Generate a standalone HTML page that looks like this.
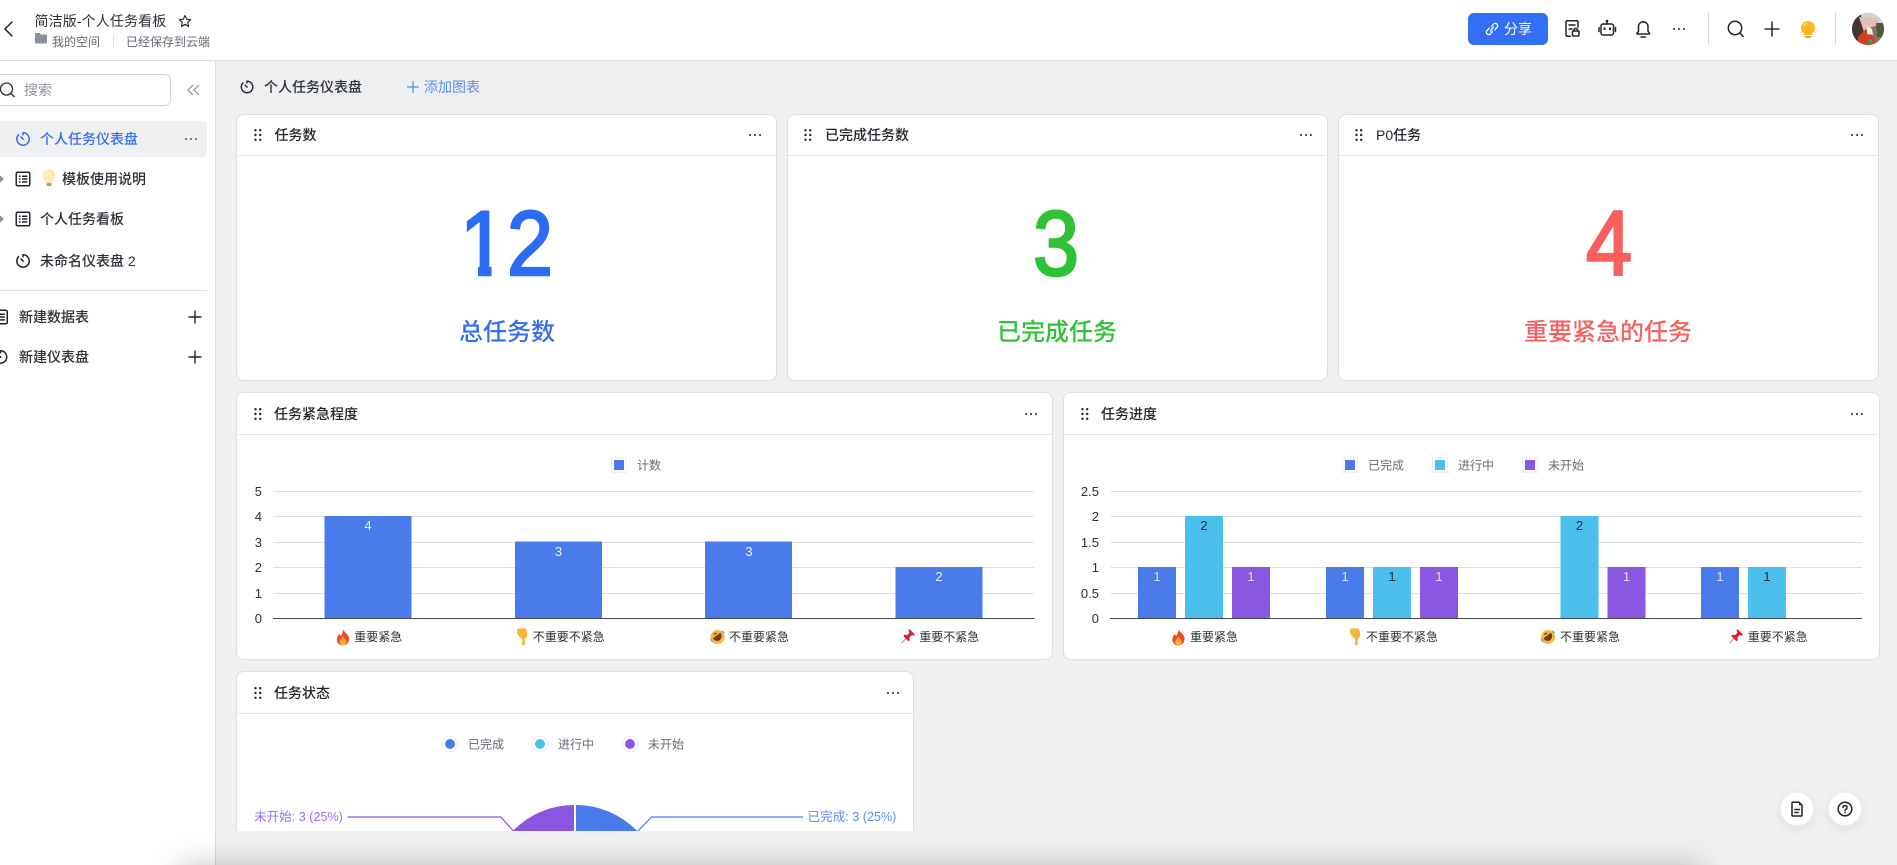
<!DOCTYPE html>
<html lang="zh-CN">
<head>
<meta charset="utf-8">
<title>简洁版-个人任务看板</title>
<style>
html,body{margin:0;padding:0;width:1897px;height:865px;overflow:hidden;background:#eff0f2;}
body{position:relative;font-family:"Liberation Sans","Noto Sans CJK SC",sans-serif;color:#1f2329;}
.t{position:absolute;white-space:nowrap;line-height:20px;height:20px;font-size:14px;}
.n{font-weight:500;color:#2b2f36;}
.hdr{position:absolute;left:0;top:0;width:1897px;height:60px;background:#fff;border-bottom:1px solid #dcdee1;}
.side{position:absolute;left:0;top:61px;width:215px;height:804px;background:#fff;border-right:1px solid #d9dbde;}
.search{position:absolute;left:-10px;top:74px;width:179px;height:30px;border:1px solid #d0d3d6;border-radius:6px;background:#fff;}
.act{position:absolute;left:0;top:121px;width:207px;height:36px;background:#eff0f2;border-radius:0 4px 4px 0;}
.dvd{position:absolute;left:0;top:290px;width:207px;height:1px;background:#dcdee1;}
.card{position:absolute;background:#fff;border:1px solid #dcdee1;border-radius:8px;box-sizing:border-box;}
.hr{position:absolute;height:1px;background:#e0e2e5;}
.ct{font-weight:500;color:#1f2329;}
.big{position:absolute;font-size:92px;font-weight:400;line-height:92px;height:92px;width:60px;white-space:nowrap;transform:scaleX(.9);text-align:center;-webkit-text-stroke:2.6px currentColor;}
.sub{position:absolute;font-size:24px;font-weight:500;line-height:34px;height:34px;white-space:nowrap;text-align:center;}
.share{position:absolute;left:1468px;top:13px;width:80px;height:32px;border-radius:6px;background:#336ff5;}
.sep{position:absolute;width:1px;background:#d6d8db;}
.cover{position:absolute;left:216px;top:831px;width:1681px;height:34px;background:#eff0f2;}
.shade{position:absolute;left:185px;top:873px;width:1510px;height:20px;box-shadow:0 0 32px 6px rgba(0,0,0,.26);background:#bbb;}
.fab{position:absolute;width:34px;height:34px;border-radius:50%;background:#fff;box-shadow:0 3px 10px rgba(0,0,0,.08);border:1px solid #f0f1f2;box-sizing:border-box;}
svg{overflow:visible;}
svg.layer{position:absolute;left:0;top:0;width:1897px;height:865px;pointer-events:none;}
svg text{font-family:"Liberation Sans","Noto Sans CJK SC",sans-serif;}
.ic{fill:none;stroke:#1f2329;stroke-width:1.5;stroke-linecap:round;stroke-linejoin:round;}
</style>
</head>
<body>

<svg width="0" height="0" style="position:absolute">
<defs>
<symbol id="clock" viewBox="0 0 16 16"><path d="M8 1.4a6.6 6.6 0 1 1-4.7 2" fill="none" stroke="currentColor" stroke-width="1.6" stroke-linecap="round"/><path d="M8 1.4v2M8.2 8.2 5.8 5.8" fill="none" stroke="currentColor" stroke-width="1.6" stroke-linecap="round"/></symbol>
<symbol id="table" viewBox="0 0 16 16"><rect x=".8" y=".8" width="14.4" height="14.4" rx="1.5" fill="none" stroke="currentColor" stroke-width="1.6"/><path d="M3.6 5h1.8M7 5h5.6M3.6 8h1.8M7 8h5.6M3.6 11h1.8M7 11h5.6" stroke="currentColor" stroke-width="1.6"/></symbol>
<symbol id="drag" viewBox="0 0 8 12"><g fill="#1f2329"><circle cx="1.5" cy="1.2" r="1.2"/><circle cx="6.2" cy="1.2" r="1.2"/><circle cx="1.5" cy="6" r="1.2"/><circle cx="6.2" cy="6" r="1.2"/><circle cx="1.5" cy="10.800" r="1.2"/><circle cx="6.2" cy="10.800" r="1.2"/></g></symbol>
<symbol id="more" viewBox="0 0 14 4"><g fill="#1f2329"><circle cx="2" cy="2" r="1"/><circle cx="7" cy="2" r="1"/><circle cx="12" cy="2" r="1"/></g></symbol>
<symbol id="plus" viewBox="0 0 14 14"><path d="M7 0v14M0 7h14" stroke="currentColor" stroke-width="1.5" fill="none"/></symbol>
<symbol id="fire" viewBox="0 0 14 16"><path d="M7 0c.5 3 4 4.500 5.500 8 1.200 3.500-1.500 8-5.500 8S.3 12.500 1.500 8.500C2 7 3 6 3.500 5c.5 1 1 1.500 1.500 2C6 5 7.500 3 7 0z" fill="#ef4b23"/><path d="M7 7c.5 2 3 3 3 5.500S8.500 16 7 16s-3-1.300-3-3.500C4 10.500 6.500 9.500 7 7z" fill="#fbb03b"/></symbol>
<symbol id="hand" viewBox="0 0 12 16"><path d="M1 0h8c1 2 1.500 4 1.500 6 0 1.800-.8 3-2.300 3.200V14.500c0 1.800-2.600 1.800-2.600 0V9.500C3.800 9 1.500 6 1 4z" fill="#f5b537"/></symbol>
<symbol id="rofl" viewBox="0 0 16 16"><circle cx="8" cy="8" r="7.500" fill="#f6b93b"/><path d="M3 9.500 11 3.500c2 2 2 5-.5 7.500S5 12 3 9.500z" fill="#7a3b16"/><path d="M4 5.200l3-1.500M9.500 10.800l2.200-2.300" stroke="#5b3310" stroke-width="1.200"/><path d="M1 10c0 2 1 3 3 3M12 2c1.500 0 2.500.8 3 2" stroke="#5db5ea" stroke-width="1.500" fill="none"/></symbol>
<symbol id="pin" viewBox="0 0 16 16"><path d="M1 15 6.500 9.500" stroke="#8a8f96" stroke-width="1"/><path d="M9.500 0 15.500 6 13.500 7 12 6.500 9.500 9 10 12 8.500 13 3 7.500 4 6 7 6.500 9.500 4 8.500 2z" fill="#d8232f"/></symbol>
<clipPath id="clipTop"><rect x="0" y="0" width="1897" height="831"/></clipPath>
</defs>
</svg>

<!-- top bar -->
<div class="hdr"></div>
<svg class="layer" style="z-index:2">
  <path d="M12 22 5 29l7 7" class="ic" stroke-width="1.600"/>
  <path d="M185 15.500l1.700 3.700 4 .5-3 2.700.8 4-3.500-2-3.500 2 .8-4-3-2.700 4-.5z" fill="none" stroke="#1f2329" stroke-width="1.100" stroke-linejoin="round"/>
  <path d="M35 34a1 1 0 0 1 1-1h3.500l1.500 1.500h5a1 1 0 0 1 1 1v7a1 1 0 0 1-1 1H36a1 1 0 0 1-1-1z" fill="#8b929c"/>
  <rect x="113" y="35" width="1" height="11" fill="#dcdee1"/>
</svg>
<div class="t" style="left:34.500px;top:11px;color:#2b2f36;letter-spacing:.12px">简洁版-个人任务看板</div>
<div class="t" style="left:52px;top:32px;font-size:12px;color:#646a73">我的空间</div>
<div class="t" style="left:126px;top:32px;font-size:12px;color:#646a73">已经保存到云端</div>

<div class="share"></div>
<div class="t" style="left:1504px;top:19px;color:#fff;z-index:2">分享</div>
<div class="sep" style="left:1708px;top:13px;height:32px"></div>
<div class="sep" style="left:1835px;top:13px;height:32px"></div>
<svg class="layer" style="z-index:2">
  <!-- link -->
  <g fill="none" stroke="#fff" stroke-width="1.300" stroke-linecap="round">
    <path d="M1491.500 26.500l2-2.300a2.400 2.400 0 0 1 3.500 3.300l-2.200 2.300"/>
    <path d="M1492.500 31.500l-2 2.300a2.400 2.400 0 0 1-3.500-3.300l2.200-2.300"/>
    <path d="M1490.500 31l3-4"/>
  </g>
  <!-- doc lock -->
  <g class="ic">
    <path d="M1578 27v-5a1.300 1.300 0 0 0-1.300-1.300h-9.400a1.300 1.300 0 0 0-1.300 1.300v13a1.300 1.300 0 0 0 1.300 1.300h3"/>
    <path d="M1569 25h6M1569 29h3"/>
    <rect x="1572.500" y="31" width="6.500" height="5" rx="1"/>
    <path d="M1574 31v-1.200a1.800 1.800 0 0 1 3.500 0V31"/>
  </g>
  <!-- robot -->
  <g class="ic">
    <rect x="1601" y="24" width="12.500" height="11" rx="2"/>
    <path d="M1607 24v-2.500"/>
    <path d="M1599 27.500v4M1615.500 27.500v4"/>
  </g>
  <circle cx="1607" cy="21" r="1.300" fill="#1f2329"/>
  <rect x="1603.500" y="27.500" width="2" height="2.500" fill="#1f2329"/><rect x="1609" y="27.500" width="2" height="2.500" fill="#1f2329"/>
  <!-- bell -->
  <g class="ic">
    <path d="M1637 34h12.500v-.8l-1.500-2v-4.700a4.700 4.700 0 0 0-9.500 0v4.700l-1.500 2z"/>
    <path d="M1641 37h4.500"/>
    <path d="M1643.300 21.500v.5"/>
  </g>
  <use href="#more" x="1672" y="27" width="14" height="4"/>
  <!-- search -->
  <g class="ic" stroke-width="1.600">
    <circle cx="1735" cy="28" r="6.700"/><path d="M1740 33l3.200 3.500"/>
  </g>
  <!-- plus -->
  <path d="M1772 21.500v15M1764.500 29h15" stroke="#2b2f36" stroke-width="1.600" fill="none"/>
  <!-- top bulb -->
  <path d="M1808 21a7 7 0 0 1 4 12.800V35h-8v-1.200a7 7 0 0 1 4-12.800z" fill="#ffb820"/>
  <path d="M1804.500 36h7l-1.200 1.800h-4.600z" fill="#f5862c"/>
  <path d="M1803.500 26a5 5 0 0 1 3-2.500" stroke="#ffe7a8" stroke-width="1" fill="none"/>
  <!-- avatar -->
  <clipPath id="av"><circle cx="1868" cy="29" r="16"/></clipPath>
  <g clip-path="url(#av)">
    <rect x="1852" y="13" width="32" height="32" fill="#8f6f62"/>
    <rect x="1852" y="13" width="32" height="10" fill="#cfd3d6"/>
    <path d="M1852 13h8l5 13-6 19h-7z" fill="#43342f"/>
    <path d="M1859 17l17 1 5 7-10 2-6 8z" fill="#e6bdb4"/>
    <path d="M1876 23h8v14h-7z" fill="#4e5a38"/>
    <path d="M1858 37l8-8 6 6 5 10h-19z" fill="#cf3f2c"/>
    <path d="M1867 26l5 3 1 6-6-1z" fill="#f4eee7"/>
    <path d="M1868 40l3-1 2 3-4 2z" fill="#3d9e56"/>
  </g>
</svg>

<!-- sidebar -->
<div class="side"></div>
<div class="search"></div>
<div class="act"></div>
<div class="dvd"></div>
<div class="t" style="left:24px;top:80px;color:#8f959e">搜索</div>
<div class="t" style="left:40px;top:129px;color:#336df4;font-weight:500">个人任务仪表盘</div>
<div class="t n" style="left:62px;top:169px">模板使用说明</div>
<div class="t n" style="left:40px;top:209px">个人任务看板</div>
<div class="t n" style="left:40px;top:251px">未命名仪表盘 2</div>
<div class="t n" style="left:19px;top:307px">新建数据表</div>
<div class="t n" style="left:19px;top:347px">新建仪表盘</div>

<svg class="layer" style="z-index:2">
  <g fill="none" stroke="#2b2f36" stroke-width="1.300"><circle cx="6.500" cy="89" r="6"/><path d="M11 93.500l3.500 3.500"/></g>
  <path d="M193 85l-5 5 5 5M199 85l-5 5 5 5" fill="none" stroke="#8a9099" stroke-width="1.200"/>
  <use href="#clock" x="15.500" y="131.500" width="15" height="15" style="color:#336df4"/>
  <use href="#more" x="184" y="137" width="14" height="4" opacity=".75"/>
  <path d="M0 175.500l4 3.500-4 3.500zM0 215.500l4 3.500-4 3.500z" fill="#8a9099"/>
  <use href="#table" x="15.500" y="171.500" width="15" height="15" style="color:#1f2329"/>
  <use href="#table" x="15.500" y="211.500" width="15" height="15" style="color:#1f2329"/>
  <use href="#clock" x="15.500" y="253.500" width="15" height="15" style="color:#1f2329"/>
  <use href="#table" x="-7" y="309.500" width="15" height="15" style="color:#1f2329"/>
  <use href="#clock" x="-7" y="349.500" width="15" height="15" style="color:#1f2329"/>
  <use href="#plus" x="188.500" y="310.500" width="13" height="13" style="color:#1f2329"/>
  <use href="#plus" x="188.500" y="350.500" width="13" height="13" style="color:#1f2329"/>
  <!-- bulb emoji -->
  <path d="M49 169.500a5.700 5.700 0 0 1 3.400 10.300l-.9 3h-5l-.9-3A5.700 5.700 0 0 1 49 169.500z" fill="#fdeeb0" stroke="#f5d77a" stroke-width=".6"/>
  <rect x="46.500" y="183" width="5" height="3" rx="1" fill="#9ca1a8"/>
</svg>

<!-- toolbar -->
<div class="t n" style="left:264px;top:77px">个人任务仪表盘</div>
<div class="t" style="left:424px;top:77px;color:#5b8cf5">添加图表</div>
<svg class="layer" style="z-index:2">
  <use href="#clock" x="240" y="80" width="14" height="14" style="color:#1f2329"/>
  <use href="#plus" x="407" y="81" width="12" height="12" style="color:#5b8cf5"/>
</svg>

<!-- cards -->
<div class="card" style="left:236px;top:113.500px;width:540.500px;height:267px"></div>
<div class="card" style="left:787px;top:113.500px;width:540.500px;height:267px"></div>
<div class="card" style="left:1338px;top:113.500px;width:540.500px;height:267px"></div>
<div class="card" style="left:236px;top:392px;width:816.500px;height:267.500px"></div>
<div class="card" style="left:1063px;top:392px;width:816.500px;height:267.500px"></div>
<div class="card" style="left:236px;top:671px;width:678px;height:190px"></div>

<div class="hr" style="left:238px;top:155px;width:537px"></div>
<div class="hr" style="left:788px;top:155px;width:538px"></div>
<div class="hr" style="left:1339px;top:155px;width:539px"></div>
<div class="hr" style="left:238px;top:434px;width:814px"></div>
<div class="hr" style="left:1064px;top:434px;width:814px"></div>
<div class="hr" style="left:238px;top:713px;width:675px"></div>

<div class="t ct" style="left:274.500px;top:125px">任务数</div>
<div class="t ct" style="left:825px;top:125px">已完成任务数</div>
<div class="t ct" style="left:1376px;top:125px">P0任务</div>
<div class="t ct" style="left:274px;top:404px">任务紧急程度</div>
<div class="t ct" style="left:1101px;top:404px">任务进度</div>
<div class="t ct" style="left:274px;top:683px">任务状态</div>

<div class="big" style="left:452.500px;top:197.500px;color:#2c6bf6;clip-path:polygon(0 0,60px 0,60px 66px,39.500px 66px,39.500px 100px,24.500px 100px,24.500px 66px,0 66px)">1</div>
<div class="big" style="left:500px;top:197.500px;color:#2c6bf6">2</div>
<div class="big" style="left:1026px;top:197.500px;color:#2fc236">3</div>
<div class="big" style="left:1578.500px;top:197.500px;color:#f85f5d">4</div>
<div class="sub" style="left:357px;top:316px;width:300px;color:#336df4">总任务数</div>
<div class="sub" style="left:907px;top:316px;width:300px;color:#2fc236">已完成任务</div>
<div class="sub" style="left:1458px;top:316px;width:300px;color:#f85f5d">重要紧急的任务</div>

<!-- charts -->
<svg class="layer" style="z-index:2">
  <g>
    <use href="#drag" x="254" y="129" width="8" height="12"/>
    <use href="#drag" x="804" y="129" width="8" height="12"/>
    <use href="#drag" x="1355" y="129" width="8" height="12"/>
    <use href="#drag" x="254" y="408" width="8" height="12"/>
    <use href="#drag" x="1081" y="408" width="8" height="12"/>
    <use href="#drag" x="254" y="687" width="8" height="12"/>
    <use href="#more" x="748" y="133" width="14" height="4"/>
    <use href="#more" x="1299" y="133" width="14" height="4"/>
    <use href="#more" x="1850" y="133" width="14" height="4"/>
    <use href="#more" x="1024" y="412" width="14" height="4"/>
    <use href="#more" x="1850" y="412" width="14" height="4"/>
    <use href="#more" x="886" y="691" width="14" height="4"/>
  </g>

  <!-- chart 1 -->
  <rect x="611.500" y="457.500" width="15" height="15" fill="#fff" stroke="#eceef0"/>
  <rect x="614" y="460" width="10" height="10" fill="#4a7bea"/>
  <text x="637" y="469.500" font-size="12" fill="#646a73">计数</text>
  <g stroke="#dcdee1" stroke-width="1">
    <path d="M273.500 491.500H1034.500M273.500 516.500H1034.500M273.500 542.500H1034.500M273.500 567.500H1034.500M273.500 593.500H1034.500"/>
  </g>
  <g font-size="13" fill="#2b2f36" text-anchor="end">
    <text x="262" y="496">5</text><text x="262" y="521">4</text><text x="262" y="547">3</text><text x="262" y="572">2</text><text x="262" y="598">1</text><text x="262" y="623">0</text>
  </g>
  <g fill="#4a7bea">
    <rect x="324.500" y="516" width="87" height="102"/>
    <rect x="515" y="541.500" width="87" height="76.500"/>
    <rect x="705" y="541.500" width="87" height="76.500"/>
    <rect x="895.500" y="567" width="87" height="51"/>
  </g>
  <path d="M273 618.500H1034.500" stroke="#41464f" stroke-width="1"/>
  <g font-size="13" fill="#fff" text-anchor="middle" opacity=".9">
    <text x="368" y="530">4</text><text x="558.500" y="556">3</text><text x="749" y="556">3</text><text x="939" y="581">2</text>
  </g>
  <g font-size="12" fill="#2b2f36">
    <text x="354.300" y="641">重要紧急</text>
    <text x="532.700" y="641">不重要不紧急</text>
    <text x="729" y="641">不重要紧急</text>
    <text x="919.300" y="641">重要不紧急</text>
  </g>
  <use href="#fire" x="335.500" y="628.500" width="15" height="17"/>
  <use href="#hand" x="516" y="628.500" width="13" height="17"/>
  <use href="#rofl" x="710" y="629.500" width="15" height="15"/>
  <use href="#pin" x="900.500" y="629" width="15" height="15"/>

  <!-- chart 2 -->
  <rect x="1342.500" y="457.500" width="15" height="15" fill="#fff" stroke="#eceef0"/><rect x="1345" y="460" width="10" height="10" fill="#4a7bea"/>
  <rect x="1432.500" y="457.500" width="15" height="15" fill="#fff" stroke="#eceef0"/><rect x="1435" y="460" width="10" height="10" fill="#4cc0ec"/>
  <rect x="1522.500" y="457.500" width="15" height="15" fill="#fff" stroke="#eceef0"/><rect x="1525" y="460" width="10" height="10" fill="#8a56e2"/>
  <g font-size="12" fill="#646a73">
    <text x="1368" y="469.500">已完成</text><text x="1458" y="469.500">进行中</text><text x="1548" y="469.500">未开始</text>
  </g>
  <path d="M1110.500 491.500H1862M1110.500 516.500H1862M1110.500 542.500H1862M1110.500 567.500H1862M1110.500 593.500H1862" stroke="#dcdee1" stroke-width="1"/>
  <g font-size="13" fill="#2b2f36" text-anchor="end">
    <text x="1099" y="496">2.5</text><text x="1099" y="521">2</text><text x="1099" y="547">1.5</text><text x="1099" y="572">1</text><text x="1099" y="598">0.5</text><text x="1099" y="623">0</text>
  </g>
  <g fill="#4a7bea">
    <rect x="1138" y="567" width="38" height="51"/><rect x="1326" y="567" width="38" height="51"/><rect x="1701" y="567" width="38" height="51"/>
  </g>
  <g fill="#4cc0ec">
    <rect x="1185" y="516" width="38" height="102"/><rect x="1373" y="567" width="38" height="51"/><rect x="1560.500" y="516" width="38" height="102"/><rect x="1748" y="567" width="38" height="51"/>
  </g>
  <g fill="#8a56e2">
    <rect x="1232" y="567" width="38" height="51"/><rect x="1420" y="567" width="38" height="51"/><rect x="1607.500" y="567" width="38" height="51"/>
  </g>
  <path d="M1110 618.500H1862" stroke="#41464f" stroke-width="1"/>
  <g font-size="13" text-anchor="middle">
    <text x="1157" y="581" fill="#fff" opacity=".8">1</text><text x="1204" y="530" fill="#1f2329">2</text><text x="1251" y="581" fill="#fff" opacity=".8">1</text>
    <text x="1345" y="581" fill="#fff" opacity=".8">1</text><text x="1392" y="581" fill="#1f2329">1</text><text x="1439" y="581" fill="#fff" opacity=".8">1</text>
    <text x="1579.500" y="530" fill="#1f2329">2</text><text x="1626.500" y="581" fill="#fff" opacity=".8">1</text>
    <text x="1720" y="581" fill="#fff" opacity=".8">1</text><text x="1767" y="581" fill="#1f2329">1</text>
  </g>
  <g font-size="12" fill="#2b2f36">
    <text x="1190" y="641">重要紧急</text>
    <text x="1366" y="641">不重要不紧急</text>
    <text x="1560" y="641">不重要紧急</text>
    <text x="1747.700" y="641">重要不紧急</text>
  </g>
  <use href="#fire" x="1171" y="628.500" width="15" height="17"/>
  <use href="#hand" x="1349" y="628.500" width="13" height="17"/>
  <use href="#rofl" x="1540.500" y="629.500" width="15" height="15"/>
  <use href="#pin" x="1728.500" y="629" width="15" height="15"/>

  <!-- chart 3 -->
  <circle cx="450" cy="744" r="7.500" fill="#fff" stroke="#eceef0"/><circle cx="450" cy="744" r="5" fill="#4a7bea"/>
  <circle cx="540" cy="744" r="7.500" fill="#fff" stroke="#eceef0"/><circle cx="540" cy="744" r="5" fill="#4cc0ec"/>
  <circle cx="630" cy="744" r="7.500" fill="#fff" stroke="#eceef0"/><circle cx="630" cy="744" r="5" fill="#8a56e2"/>
  <g font-size="12" fill="#646a73">
    <text x="468" y="748.500">已完成</text><text x="558" y="748.500">进行中</text><text x="648" y="748.500">未开始</text>
  </g>
  <g clip-path="url(#clipTop)">
    <path d="M574 890V805a85 85 0 0 0-85 85z" fill="#8a56e2"/>
    <path d="M576 890V805a85 85 0 0 1 85 85z" fill="#4a7bea"/>
    <path d="M347.500 817H501l14 16" fill="none" stroke="#8a56e2" stroke-width="1.200"/>
    <path d="M803 817H651.500L636 833" fill="none" stroke="#4a7bea" stroke-width="1.200"/>
  </g>
  <text x="254" y="821" font-size="12.600" fill="#9a6cea">未开始: 3 (25%)</text>
  <text x="807.500" y="821" font-size="12.600" fill="#5b8cf5">已完成: 3 (25%)</text>
</svg>

<div class="cover" style="z-index:3"></div>
<div class="shade" style="z-index:4"></div>

<div class="fab" style="left:1780px;top:792px;z-index:5"></div>
<div class="fab" style="left:1828px;top:792px;z-index:5"></div>
<svg class="layer" style="z-index:6">
  <g class="ic" stroke-width="1.300">
    <path d="M1792 803a.8.8 0 0 1 .8-.8h6.200l3 3v10a.8.8 0 0 1-.8.8h-8.400a.8.8 0 0 1-.8-.8z"/>
    <path d="M1795 809.500h4.500M1795 812.500h3"/>
  </g>
  <path d="M1799 802v3.200h3.200z" fill="#1f2329"/>
  <g class="ic" stroke-width="1.300">
    <circle cx="1845" cy="809" r="6.800"/>
    <path d="M1843 807.500a2 2 0 1 1 3 1.700c-.6.400-1 .8-1 1.500"/>
  </g>
  <circle cx="1845" cy="812.700" r=".8" fill="#1f2329"/>
</svg>

</body>
</html>
